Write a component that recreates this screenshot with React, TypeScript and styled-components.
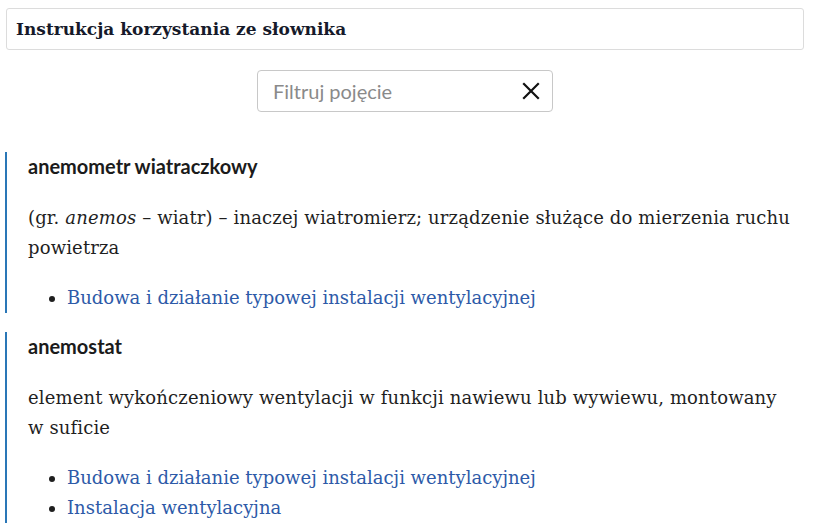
import React from "react";
import styled, { createGlobalStyle } from "styled-components";

const Global = createGlobalStyle`
  html, body { margin: 0; padding: 0; background: #fff; }
  body { font-family: Lato, "Noto Sans", sans-serif; color: #1b1b1b; }
`;

const Page = styled.div`
  padding: 8px 11px 0 6px;
  display: flex;
  flex-direction: column;
`;

const TitleBox = styled.div`
  border: 1px solid #dcdcdc;
  border-radius: 3px;
  height: 40px;
  display: flex;
  align-items: center;
  padding: 0 9px;
`;

const Title = styled.h1`
  margin: 0;
  font-family: "DejaVu Serif", serif;
  font-weight: bold;
  font-size: 17px;
  color: #161a2a;
`;

const FilterRow = styled.div`
  display: flex;
  justify-content: center;
  margin-top: 20px;
`;

const FilterBox = styled.div`
  width: 296px;
  height: 42px;
  border: 1px solid #c8c8c8;
  border-radius: 4px;
  display: flex;
  align-items: center;
  padding: 0 11px 0 15px;
  box-sizing: border-box;
`;

const FilterInput = styled.input`
  flex: 1;
  min-width: 0;
  border: none;
  outline: none;
  font-family: Lato, sans-serif;
  font-size: 20px;
  color: #333;
  padding: 0;
  background: transparent;
  &::placeholder { color: #8a8a8a; }
`;

const ClearIcon = styled.svg`
  width: 20px;
  height: 20px;
  flex: none;
`;

const List = styled.div`
  margin-top: 40px;
  display: flex;
  flex-direction: column;
  gap: 19px;
`;

const Entry = styled.section`
  border-left: 2px solid #2a77b7;
  margin-left: -1px;
  padding: 0 10px 0 21px;
`;

const Term = styled.h2`
  margin: 0;
  padding-top: 2px;
  font-family: Lato, sans-serif;
  font-weight: bold;
  font-size: 20px;
  line-height: 24px;
  color: #1b1b1b;
`;

const Definition = styled.p`
  margin: 25px 0 0;
  font-family: "DejaVu Serif", serif;
  font-size: 18px;
  line-height: 30px;
  letter-spacing: 0.14px;
  color: #1f1f1f;
`;

const Links = styled.ul`
  margin: 20px 0 0;
  padding: 0 0 0 39px;
  list-style: disc;
`;

const LinkItem = styled.li`
  font-family: "DejaVu Serif", serif;
  font-size: 18px;
  line-height: 30px;
  color: #1f1f1f;
`;

const Link = styled.a`
  color: #2d5aa8;
  text-decoration: none;
`;

const entries = [
  {
    term: "anemometr wiatraczkowy",
    def: (
      <>
        (gr. <em>anemos</em> – wiatr) – inaczej wiatromierz; urządzenie służące do mierzenia ruchu powietrza
      </>
    ),
    links: ["Budowa i działanie typowej instalacji wentylacyjnej"],
  },
  {
    term: "anemostat",
    def: <>element wykończeniowy wentylacji w funkcji nawiewu lub wywiewu, montowany w suficie</>,
    links: ["Budowa i działanie typowej instalacji wentylacyjnej", "Instalacja wentylacyjna"],
  },
];

export default function App() {
  return (
    <>
      <Global />
      <Page>
        <TitleBox>
          <Title>Instrukcja korzystania ze słownika</Title>
        </TitleBox>
        <FilterRow>
          <FilterBox>
            <FilterInput placeholder="Filtruj pojęcie" />
            <ClearIcon viewBox="0 0 20 20">
              <path d="M3 3L17 17M17 3L3 17" stroke="#111" strokeWidth="2.2" strokeLinecap="square" />
            </ClearIcon>
          </FilterBox>
        </FilterRow>
        <List>
          {entries.map((e) => (
            <Entry key={e.term}>
              <Term>{e.term}</Term>
              <Definition>{e.def}</Definition>
              <Links>
                {e.links.map((l) => (
                  <LinkItem key={l}>
                    <Link href="#">{l}</Link>
                  </LinkItem>
                ))}
              </Links>
            </Entry>
          ))}
        </List>
      </Page>
    </>
  );
}
